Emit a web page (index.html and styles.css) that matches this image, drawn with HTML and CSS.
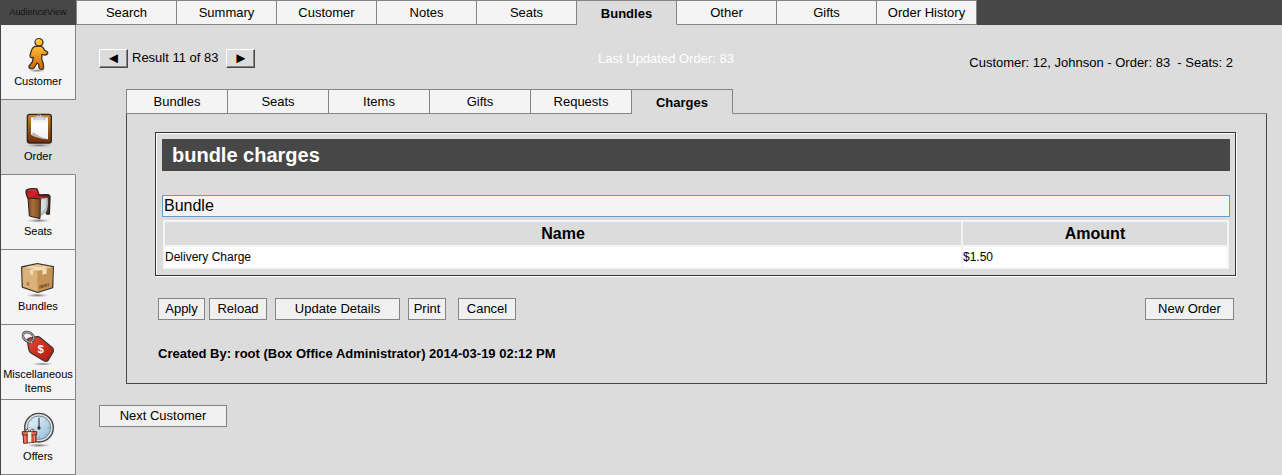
FILE: index.html
```html
<!DOCTYPE html>
<html lang="en">
<head>
  <meta charset="UTF-8" />
  <meta name="viewport" content="width=device-width, initial-scale=1" />
  <title>AudienceView - Bundle Charges</title>
  <link rel="stylesheet" href="styles.css">
</head>
<body>
  <header class="topbar">
    <div class="brand">AudienceView</div>
    <nav class="tabs main-tabs">
      <a href="#" class="tab">Search</a>
      <a href="#" class="tab">Summary</a>
      <a href="#" class="tab">Customer</a>
      <a href="#" class="tab">Notes</a>
      <a href="#" class="tab">Seats</a>
      <a href="#" class="tab active">Bundles</a>
      <a href="#" class="tab">Other</a>
      <a href="#" class="tab">Gifts</a>
      <a href="#" class="tab">Order History</a>
    </nav>
  </header>

  <div class="main-wrapper">
    <nav class="sidebar">
      <a href="#" class="side-item">
        <svg class="icon" viewBox="54 48 120 114" aria-hidden="true">
          <defs>
            <linearGradient id="orange" x1="0" y1="0" x2="0" y2="1">
              <stop offset="0" stop-color="#ffc02e" />
              <stop offset="1" stop-color="#cc620e" />
            </linearGradient>
            <radialGradient id="shadow">
              <stop offset="0" stop-color="#777" />
              <stop offset="1" stop-color="#999" stop-opacity="0" />
            </radialGradient>
          </defs>
          <ellipse cx="111" cy="152" rx="26" ry="5" fill="url(#shadow)" />
          <path d="M103 80 Q96 84 93 95 L90 108 Q91 114 97 113 L100 112 L97 126 L87 138 Q86 144 93 146 Q101 148 104 141 L111 129 L116 133 L117 144 Q120 150 129 147 Q132 144 130 132 L125 116 L126 103 L136 105 Q144 103 143 96 L134 91 L128 81 Q118 76 103 80 Z" fill="url(#orange)" stroke="#453425" stroke-width="4" stroke-linejoin="round" />
          <ellipse cx="117" cy="67" rx="12" ry="11" fill="#ffc12c" stroke="#453425" stroke-width="4" />
          <path d="M108 65 Q111 58 119 59" fill="none" stroke="#ffe58c" stroke-width="3" />
        </svg>
        <span class="side-label">Customer</span>
      </a>
      <a href="#" class="side-item active">
        <svg class="icon" viewBox="54 273 120 114" aria-hidden="true">
          <defs>
            <linearGradient id="board" x1="0" y1="0" x2="0" y2="1">
              <stop offset="0" stop-color="#c88829" />
              <stop offset=".5" stop-color="#98581a" />
              <stop offset="1" stop-color="#6d2d0c" />
            </linearGradient>
            <linearGradient id="paper" x1="0" y1="0" x2="0" y2="1">
              <stop offset="0" stop-color="#e5e5e5" />
              <stop offset=".3" stop-color="#fff" />
              <stop offset="1" stop-color="#f0f0f0" />
            </linearGradient>
          </defs>
          <ellipse cx="118" cy="376" rx="40" ry="6" fill="url(#shadow)" />
          <rect x="82" y="283" width="72" height="86" rx="7" fill="url(#board)" stroke="#30251e" stroke-width="4" />
          <path d="M93 292 H144 V358 Q124 355 93 344 Z" fill="url(#paper)" />
          <path d="M93 344 Q99 344 99 336 Q116 350 144 358 Q116 357 93 344 Z" fill="#b8b8b8" />
          <path d="M103 298 V290 Q112 290 113 286 Q118 278 123 286 Q124 290 134 290 V298 Z" fill="#c9c9c9" stroke="#999" stroke-width="2" />
          <path d="M104 297 H133" stroke="#f6f6f6" stroke-width="3" />
          <circle cx="118" cy="285" r="3" fill="#555" />
        </svg>
        <span class="side-label">Order</span>
      </a>
      <a href="#" class="side-item">
        <svg class="icon" viewBox="54 48 120 114" aria-hidden="true">
          <defs>
            <linearGradient id="velvet" x1="0" y1="0" x2="1" y2="1">
              <stop offset="0" stop-color="#8d1214" />
              <stop offset=".5" stop-color="#d2262a" />
              <stop offset="1" stop-color="#8f1114" />
            </linearGradient>
            <linearGradient id="wood" x1="0" y1="0" x2="1" y2="0">
              <stop offset="0" stop-color="#7a4820" />
              <stop offset=".4" stop-color="#aa6e38" />
              <stop offset="1" stop-color="#7a4820" />
            </linearGradient>
          </defs>
          <ellipse cx="116" cy="152" rx="36" ry="6" fill="url(#shadow)" />
          <path d="M114 75 L145 74 L150 79 L148 132 L140 132 L137 125 L119 133 Z" fill="#493327" stroke="#28211e" stroke-width="4" stroke-linejoin="round" />
          <path d="M85 86 Q76 72 79 60 Q92 54 111 57 Q116 67 119 86 Z" fill="url(#velvet)" stroke="#38211f" stroke-width="4" stroke-linejoin="round" />
          <path d="M84 62 Q96 58 108 61" fill="none" stroke="#ec6264" stroke-width="2" />
          <path d="M94 83 L116 78 L141 80 L140 86 L120 89 Z" fill="#bf2024" />
          <path d="M120 86 L143 83 Q146 110 138 128 L119 140 Z" fill="#b4bcbd" />
          <path d="M122 89 L137 86 V114 L122 130 Z" fill="#e5e9e9" opacity=".7" />
          <path d="M84 84 L121 87 L120 146 L88 138 Z" fill="url(#wood)" stroke="#332014" stroke-width="3" stroke-linejoin="round" />
        </svg>
        <span class="side-label">Seats</span>
      </a>
      <a href="#" class="side-item">
        <svg class="icon" viewBox="54 273 120 114" aria-hidden="true">
          <ellipse cx="112" cy="376" rx="34" ry="6" fill="url(#shadow)" />
          <path d="M65 291 L112 281 L160 290 L158 353 L113 367 L67 351 Z" fill="#c69354" stroke="#3c3732" stroke-width="4" stroke-linejoin="round" />
          <path d="M67 293 L112 283 L158 292 L113 304 Z" fill="#e6c390" />
          <path d="M67 294 L113 305 V365 L69 350 Z" fill="#dcb17a" />
          <path d="M113 305 L158 293 L156 352 L113 365 Z" fill="#c49355" />
          <path d="M80 290 L91 287 L140 297 V311 L127 314 V301 Z" fill="#f1ddb5" />
          <path d="M90 300 L136 288 L145 290 L99 302 V316 L90 313 Z" fill="#f5e5c4" opacity=".8" />
          <path d="M82 336 V346 M86 337 V347" stroke="#75502a" stroke-width="2" />
          <path d="M120 346 V356 M124 345 V355 M128 344 V354 M132 343 V352 M136 342 V351 M140 341 V350 M145 340 V349" stroke="#4e3520" stroke-width="2" />
        </svg>
        <span class="side-label">Bundles</span>
      </a>
      <a href="#" class="side-item">
        <svg class="icon" viewBox="54 27 120 114" aria-hidden="true">
          <defs>
            <linearGradient id="tag" x1="0" y1="0" x2="1" y2="1">
              <stop offset="0" stop-color="#e84a35" />
              <stop offset="1" stop-color="#ac160e" />
            </linearGradient>
          </defs>
          <ellipse cx="128" cy="132" rx="32" ry="5" fill="url(#shadow)" />
          <path d="M86 55 L110 50 Q116 49 121 53 L157 83 Q162 88 160 94 L145 120 Q140 126 133 123 L93 99 Q88 96 87 90 L82 63 Q82 57 86 55 Z" fill="url(#tag)" stroke="#43312d" stroke-width="4" stroke-linejoin="round" />
          <circle cx="94" cy="66" r="5" fill="#f3f3f3" stroke="#5b2723" stroke-width="2" />
          <path d="M94 67 Q75 65 69 51 Q67 37 79 36 Q94 36 102 51 Q103 60 95 64" fill="none" stroke="#454545" stroke-width="7" />
          <path d="M94 67 Q75 65 69 51 Q67 37 79 36 Q94 36 102 51 Q103 60 95 64" fill="none" stroke="#c6c6c6" stroke-width="3" />
          <text class="tag-sign" x="122" y="98" text-anchor="middle">$</text>
        </svg>
        <span class="side-label">Miscellaneous Items</span>
      </a>
      <a href="#" class="side-item">
        <svg class="icon" viewBox="54 273 120 114" aria-hidden="true">
          <defs>
            <linearGradient id="glass" x1="0" y1="0" x2="1" y2="1">
              <stop offset="0" stop-color="#f0f8fc" />
              <stop offset="1" stop-color="#8fbddb" />
            </linearGradient>
          </defs>
          <ellipse cx="116" cy="376" rx="36" ry="6" fill="url(#shadow)" />
          <circle cx="117" cy="323" r="43" fill="#dedede" stroke="#414548" stroke-width="4" />
          <circle cx="117" cy="323" r="35" fill="url(#glass)" stroke="#72818b" stroke-width="3" />
          <path d="M117 292 V297 M117 349 V354 M148 323 H143 M86 323 H91 M139 301 L136 304 M95 301 L98 304 M139 345 L136 342" stroke="#51738a" stroke-width="2" />
          <path d="M117 295 V324" stroke="#202427" stroke-width="3" />
          <circle cx="117" cy="324" r="5" fill="#333" />
          <path d="M69 337 L108 335 V366 L71 370 Z" fill="#dd4930" stroke="#503028" stroke-width="3" stroke-linejoin="round" />
          <path d="M67 335 H110 V345 H67 Z" fill="#f16b4c" stroke="#503028" stroke-width="3" />
          <path d="M84 336 H94 V367 H84 Z" fill="#f4eeeb" />
          <path d="M75 346 V368 M103 346 V365" stroke="#f9a38e" stroke-width="3" />
          <path d="M88 335 Q72 334 77 328 Q84 325 89 335 Q94 324 101 328 Q106 334 88 335 Z" fill="#fff" stroke="#554d4a" stroke-width="3" />
        </svg>
        <span class="side-label">Offers</span>
      </a>
    </nav>

    <main class="content">
      <div class="result-bar">
        <div class="pager">
          <button type="button" class="pager-btn" title="Previous">&#9668;</button>
          <span>Result 11 of 83</span>
          <button type="button" class="pager-btn" title="Next">&#9658;</button>
        </div>
        <div class="last-updated">Last Updated Order: 83</div>
        <div class="context">Customer: 12, Johnson - Order: 83 &nbsp;- Seats: 2</div>
      </div>

      <div class="order-area">
        <div class="sub-tabs-row">
          <nav class="tabs sub-tabs">
            <a href="#" class="tab">Bundles</a>
            <a href="#" class="tab">Seats</a>
            <a href="#" class="tab">Items</a>
            <a href="#" class="tab">Gifts</a>
            <a href="#" class="tab">Requests</a>
            <a href="#" class="tab active">Charges</a>
          </nav>
        </div>
        <div class="panel">
          <section class="charges">
            <h1>bundle charges</h1>
            <input type="text" class="bundle-name" value="Bundle" aria-label="Bundle name" readonly />
            <table class="charge-table">
              <thead>
                <tr><th class="col-name">Name</th><th class="col-amount">Amount</th></tr>
              </thead>
              <tbody>
                <tr><td>Delivery Charge</td><td>$1.50</td></tr>
              </tbody>
            </table>
          </section>
          <div class="buttons">
            <div class="btn-group">
              <button type="button" class="btn">Apply</button>
              <button type="button" class="btn btn-medium">Reload</button>
            </div>
            <button type="button" class="btn btn-wide">Update Details</button>
            <button type="button" class="btn btn-small">Print</button>
            <button type="button" class="btn btn-medium btn-cancel">Cancel</button>
            <button type="button" class="btn btn-new">New Order</button>
          </div>
          <p class="created-by">Created By: root (Box Office Administrator) 2014-03-19 02:12 PM</p>
        </div>
      </div>

      <button type="button" class="btn btn-next">Next Customer</button>
    </main>
  </div>
</body>
</html>
```
FILE: styles.css
```css
* {
  box-sizing: border-box;
}
body {
  margin: 0;
  background: #dcdcdc;
  color: #000;
  font-family: "Liberation Sans", Arial, sans-serif;
  font-size: 13px;
  line-height: 16px;
}
a {
  color: inherit;
  text-decoration: none;
}

/* top bar */
.topbar {
  display: flex;
  height: 25px;
  background: #474747;
}
.brand {
  width: 76px;
  color: #111;
  font-size: 9px;
  line-height: 24px;
  text-align: center;
}
.tabs {
  display: flex;
  border-left: 1px solid #848484;
}
.tab {
  height: 25px;
  padding-top: 4px;
  background: #f4f4f4;
  border: 1px solid #848484;
  border-left: none;
  text-align: center;
}
.tab.active {
  padding-top: 5px;
  background: #dcdcdc;
  border-bottom-color: #dcdcdc;
  font-weight: bold;
}
.main-tabs .tab {
  width: 100px;
}
.sub-tabs .tab {
  width: 101px;
}

/* sidebar */
.main-wrapper {
  display: flex;
}
.sidebar {
  width: 76px;
  border-left: 1px solid #474747;
}
.side-item {
  display: flex;
  flex-direction: column;
  align-items: center;
  justify-content: center;
  height: 75px;
  padding-bottom: 1px;
  background: #f4f4f4;
  border-right: 1px solid #848484;
  border-bottom: 1px solid #848484;
}
.side-item.active {
  background: #dcdcdc;
  border-right-color: #dcdcdc;
}
.icon {
  width: 40px;
  height: 38px;
}
.tag-sign {
  fill: #fff;
  font-size: 34px;
  font-weight: bold;
}
.side-label {
  font-size: 11px;
  line-height: 14px;
  text-align: center;
}

/* content */
.content {
  flex: 1;
  padding: 23px 15px 20px 23px;
}
.result-bar {
  display: grid;
  grid-template-columns: 1fr auto 1fr;
  height: 41px;
  padding-right: 34px;
}
.pager {
  display: flex;
  align-items: center;
  gap: 4px;
  height: 20px;
}
.pager-btn {
  width: 29px;
  height: 19px;
  padding: 0;
  background: #dcdcdc;
  border: 1px solid;
  border-color: #fff #474747 #474747 #fff;
  box-shadow: inset -1px -1px 0 #848484;
  font-size: 15px;
  line-height: 16px;
}
.pager-btn:last-child {
  margin-left: 4px;
}
.last-updated {
  color: #fff;
  line-height: 21px;
}
.context {
  line-height: 29px;
  text-align: right;
}
.order-area {
  margin-left: 27px;
}
.sub-tabs-row {
  border-bottom: 1px solid #848484;
}
.sub-tabs {
  margin-bottom: -1px;
}
.panel {
  padding: 18px 30px 20px 28px;
  border: 1px solid #474747;
  border-top: none;
}
.charges {
  padding: 6px 5px 6px 6px;
  border: 1px solid #333;
  box-shadow: 1px 1px 0 #fff, inset 1px 1px 0 #fff;
}
.charges h1 {
  margin: 0 0 24px;
  padding: 0 10px;
  background: #474747;
  color: #fff;
  font-size: 20px;
  line-height: 32px;
}
.bundle-name {
  display: block;
  width: 100%;
  height: 22px;
  padding: 0 1px;
  background: #f4f4f4;
  border: 1px solid #6699cc;
  font-family: inherit;
  font-size: 16px;
  outline: none;
}
.charge-table {
  width: calc(100% - 2px);
  margin: 3px 1px 0;
  border-collapse: collapse;
}
.charge-table th,
.charge-table td {
  padding: 0;
  border: 2px solid #f4f4f4;
}
.charge-table th {
  height: 25px;
  background: #dcdcdc;
  font-size: 16px;
}
.charge-table td {
  height: 22px;
  background: #fff;
  font-size: 12px;
}
.col-name {
  width: 75%;
}

/* buttons */
.buttons {
  display: flex;
  align-items: center;
  gap: 8px;
  margin: 22px 2px 26px 3px;
}
.btn-group {
  display: flex;
  gap: 4px;
}
.btn {
  width: 47px;
  height: 22px;
  padding: 0 0 2px;
  background: #f0f0f0;
  border: 1px solid #848484;
  color: #000;
  font-family: inherit;
  font-size: 13px;
}
.btn-small {
  width: 38px;
}
.btn-medium {
  width: 58px;
}
.btn-wide {
  width: 125px;
}
.btn-cancel {
  margin-left: 4px;
}
.btn-new {
  width: 89px;
  margin-left: auto;
}
.created-by {
  margin: 0 3px;
  padding-bottom: 1px;
  font-size: 13px;
  font-weight: bold;
}
.btn-next {
  width: 128px;
  margin-top: 21px;
}
```
